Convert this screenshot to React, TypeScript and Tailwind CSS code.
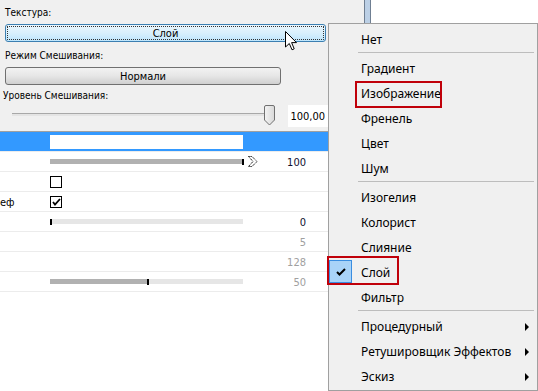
import React from "react";

const tahoma = { fontFamily: '"DejaVu Sans Condensed", "Liberation Sans", Arial, sans-serif' };
const segoe = { fontFamily: '"Noto Sans", "Open Sans", sans-serif' };

function Arrow() {
  return (
    <svg width="5" height="8" viewBox="0 0 5 8" className="absolute right-[7px] top-[9px]">
      <path d="M0 0 L4 4 L0 8 Z" fill="#000" />
    </svg>
  );
}

function MenuItem({ label, sub, checked }: { label: string; sub?: boolean; checked?: boolean }) {
  return (
    <div className="relative h-[25px] flex items-center pl-[32px] text-[12px] text-black">
      {checked && (
        <div className="absolute left-0 top-0 w-[23px] h-[23px] bg-[#a9d3f8] border border-[#3a8de0] flex items-center justify-center">
          <svg width="10" height="8" viewBox="0 0 10 8">
            <path d="M1 4 L3.5 6.5 L9 1" stroke="#000" strokeWidth="2" fill="none" />
          </svg>
        </div>
      )}
      <span>{label}</span>
      {sub && <Arrow />}
    </div>
  );
}

function Sep() {
  return (
    <div className="h-[4px] pl-[29px] pr-[3px]">
      <div className="h-px bg-[#bdbdbd]" />
    </div>
  );
}

function Bar({ fill, tick }: { fill: number; tick: "start" | "end" | "mid" }) {
  return (
    <div className="relative w-[193px] h-[5px] bg-[#e6e6e6]">
      <div className="absolute left-0 top-0 h-[5px] bg-[#b1b1b1]" style={{ width: fill }} />
      <div
        className="absolute top-0 w-[2px] h-[6px] bg-black"
        style={{ left: tick === "start" ? 0 : tick === "end" ? 192 : fill }}
      />
    </div>
  );
}

function Row({
  children,
  label,
  value,
  gray,
  selected,
  icon,
}: {
  children?: React.ReactNode;
  label?: string;
  value?: string;
  gray?: boolean;
  selected?: boolean;
  icon?: boolean;
}) {
  return (
    <div
      className={
        "relative h-[20px] border-b border-[#ececec] flex items-center text-[11px] " +
        (selected ? "bg-[#3399ff]" : "bg-white")
      }
    >
      <div className="absolute left-0 top-[3px] text-black">{label}</div>
      <div className="ml-[50px] w-[193px] flex items-center">{children}</div>
      {icon && (
        <svg width="10" height="11" viewBox="0 0 10 11" className="ml-[5px]">
          <path d="M0.5 0.5 L4 0.5 L9 5.5 L4 10.5 L0.5 10.5 L5 5.5 Z" fill="#fff" stroke="#000" strokeWidth="1" strokeDasharray="1.2 0.8" />
        </svg>
      )}
      {value !== undefined && (
        <div className={"absolute right-[58px] top-[3px] " + (gray ? "text-[#a0a0a0]" : "text-[#101030]")}>{value}</div>
      )}
    </div>
  );
}

function CheckBox({ checked }: { checked?: boolean }) {
  return (
    <div className="w-[12px] h-[12px] border border-black bg-white flex items-center justify-center">
      {checked && (
        <svg width="9" height="8" viewBox="0 0 9 8">
          <path d="M1 4 L3 6.5 L8 1" stroke="#000" strokeWidth="1.8" fill="none" />
        </svg>
      )}
    </div>
  );
}

export default function App() {
  return (
    <div className="relative w-[538px] h-[391px] overflow-hidden bg-white flex" style={tahoma}>
      <div className="w-[364px] flex flex-col">
        <div className="h-[132px] bg-[#f0f0f0] border-b border-[#a0a0a0] pl-[5px] pt-[6px] text-[11px] text-black">
          <div className="h-[13px] leading-[13px] text-[10px]">Текстура:</div>
          <div className="mt-[5px] w-[321px] h-[18px] rounded-[3px] border border-[#3c7fb1] bg-gradient-to-b from-[#eaf6fd] via-[#d9f0fc] to-[#bee6fd] p-[1px]">
            <div className="h-full border border-dotted border-[#333] rounded-[1px] flex items-center justify-center leading-none">
              Слой
            </div>
          </div>
          <div className="mt-[7px] h-[13px] leading-[13px] text-[10px]">Режим Смешивания:</div>
          <div className="mt-[5px] w-[276px] h-[18px] rounded-[3px] border border-[#707070] bg-gradient-to-b from-[#f2f2f2] via-[#e6e6e6] to-[#d0d0d0] flex items-center justify-center leading-none">
            Нормали
          </div>
          <div className="mt-[4px] -ml-[2px] h-[13px] leading-[13px] text-[10px]">Уровень Смешивания:</div>
          <div className="mt-[3px] flex items-start">
            <div className="relative w-[270px] h-[22px]">
              <div className="absolute left-[7px] top-[8px] w-[258px] h-[3px] border-t border-[#a8a8a8] bg-[#e4e4e4]" />
              <svg width="11" height="21" viewBox="0 0 11 21" className="absolute left-[259px] top-0">
                <defs>
                  <linearGradient id="th" x1="0" x2="1" y1="0" y2="0">
                    <stop offset="0" stopColor="#f4f4f4" />
                    <stop offset="1" stopColor="#d8d8d8" />
                  </linearGradient>
                </defs>
                <path d="M2 0.5 H9 Q10.5 0.5 10.5 2 V15 L5.5 20 L0.5 15 V2 Q0.5 0.5 2 0.5 Z" fill="url(#th)" stroke="#707070" />
              </svg>
            </div>
            <div className="ml-[13px] w-[40px] h-[22px] bg-white flex items-center justify-end pr-[3px] text-[11px] leading-none">
              100,00
            </div>
          </div>
        </div>
        <div className="flex flex-col">
          <Row selected>
            <div className="w-[193px] h-[14px] bg-white" />
          </Row>
          <Row value="100" icon>
            <Bar fill={193} tick="end" />
          </Row>
          <Row>
            <CheckBox />
          </Row>
          <Row label="еф">
            <CheckBox checked />
          </Row>
          <Row value="0">
            <Bar fill={0} tick="start" />
          </Row>
          <Row value="5" gray />
          <Row value="128" gray />
          <Row value="50" gray>
            <Bar fill={97} tick="mid" />
          </Row>
        </div>
      </div>
      <div className="w-[7px] h-full bg-[#bcd0e6] border-x border-[#6f7f92]" />
      <div className="flex-1 bg-white" />

      {/* cursor */}
      <svg width="13" height="20" viewBox="0 0 13 20" className="absolute left-[285px] top-[31px]">
        <path d="M0.5 0.5 V16 L4.3 12.5 L7 18.8 L9.2 17.8 L6.6 11.6 H11.5 Z" fill="#fff" stroke="#000" strokeWidth="1" strokeLinejoin="miter" />
      </svg>

      {/* popup menu */}
      <div className="absolute left-[328px] top-[23px] w-[210px] h-[368px] bg-[#f0f0f0] border border-[#a0a0a0] pt-[3px]" style={segoe}>
        <MenuItem label="Нет" />
        <Sep />
        <MenuItem label="Градиент" />
        <MenuItem label="Изображение" />
        <MenuItem label="Френель" />
        <MenuItem label="Цвет" />
        <MenuItem label="Шум" />
        <Sep />
        <MenuItem label="Изогелия" />
        <MenuItem label="Колорист" />
        <MenuItem label="Слияние" />
        <MenuItem label="Слой" checked />
        <MenuItem label="Фильтр" />
        <Sep />
        <MenuItem label="Процедурный" sub />
        <MenuItem label="Ретушировщик Эффектов" sub />
        <MenuItem label="Эскиз" sub />
      </div>

      {/* annotation boxes */}
      <div className="absolute left-[355px] top-[81px] w-[87px] h-[27px] border-[2px] border-[#c0000a]" />
      <div className="absolute left-[327px] top-[256px] w-[72px] h-[29px] border-[2px] border-[#c0000a]" />
    </div>
  );
}
